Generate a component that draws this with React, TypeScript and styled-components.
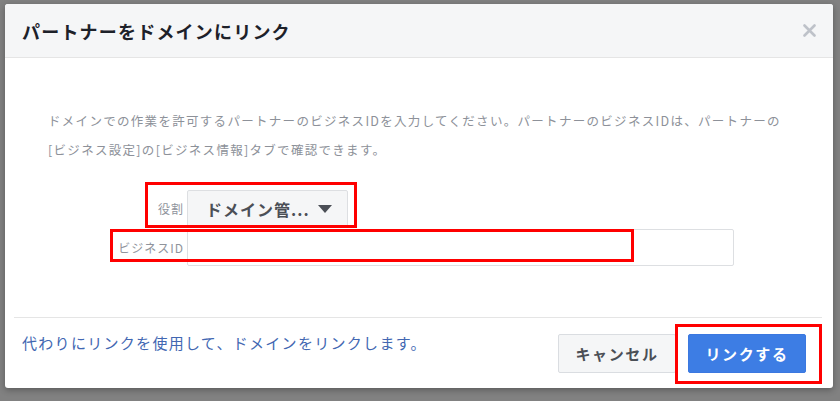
import React from 'react';
import styled, { createGlobalStyle } from 'styled-components';

const GlobalStyle = createGlobalStyle`
  html, body {
    margin: 0;
    padding: 0;
    background: #818181;
  }
  body {
    font-family: "Noto Sans CJK JP", "Noto Sans", sans-serif;
  }
`;

const Backdrop = styled.div`
  width: 840px;
  height: 401px;
  box-sizing: border-box;
  padding: 4px 7px 0 5px;
  background: #818181;
  overflow: hidden;
`;

const Dialog = styled.div`
  position: relative;
  width: 828px;
  height: 384px;
  background: #fff;
  border-radius: 3px;
  box-shadow: 0 2px 6px rgba(0, 0, 0, 0.3);
  display: flex;
  flex-direction: column;
  overflow: hidden;
`;

const Header = styled.div`
  height: 53px;
  flex: none;
  display: flex;
  align-items: center;
  justify-content: space-between;
  padding: 0 17px;
  background: #f5f6f7;
  border-bottom: 1px solid #e5e5e5;
`;

const Title = styled.h2`
  margin: 0;
  font-size: 18px;
  font-weight: 700;
  letter-spacing: 1.2px;
  color: #1d2129;
`;

const Close = styled.button`
  border: none;
  background: none;
  padding: 0;
  width: 14px;
  height: 14px;
  display: flex;
  align-items: center;
  justify-content: center;
  cursor: pointer;
`;

const Body = styled.div`
  flex: 1;
  padding: 48px 0 0 43px;
`;

const Description = styled.p`
  margin: 0;
  font-size: 12.5px;
  line-height: 29px;
  letter-spacing: 1.3px;
  color: #8d9199;
  white-space: nowrap;
`;

const Form = styled.div`
  display: grid;
  grid-template-columns: 136px 547px;
  column-gap: 3px;
  row-gap: 2px;
  margin-top: 26px;
  align-items: center;
`;

const Label = styled.label`
  text-align: right;
  font-size: 12px;
  letter-spacing: 1px;
  color: #90949c;
`;

const Dropdown = styled.button`
  justify-self: start;
  height: 37px;
  width: 161px;
  display: flex;
  align-items: center;
  gap: 8px;
  padding: 0 0 0 18px;
  box-sizing: border-box;
  background: #f5f6f7;
  border: 1px solid #dddfe2;
  border-radius: 2px;
  font-family: inherit;
  font-size: 16px;
  font-weight: 700;
  letter-spacing: 1px;
  color: #4b4f56;
`;

const Caret = styled.span`
  width: 0;
  height: 0;
  border-left: 7px solid transparent;
  border-right: 7px solid transparent;
  border-top: 8px solid #4b4f56;
`;

const Input = styled.input`
  height: 37px;
  box-sizing: border-box;
  border: 1px solid #dddfe2;
  border-radius: 2px;
  background: #fff;
`;

const Footer = styled.div`
  margin: 0 11px 0 9px;
  border-top: 1px solid #e5e5e5;
  padding: 16px 16px 15px 8px;
  display: flex;
  align-items: flex-start;
  justify-content: space-between;
`;

const AltLink = styled.a`
  margin-top: -1px;
  font-size: 15px;
  line-height: 20px;
  letter-spacing: 1.3px;
  color: #4267b2;
  text-decoration: none;
`;

const Actions = styled.div`
  display: flex;
  gap: 12px;
`;

const Button = styled.button<{ primary?: boolean }>`
  width: 118px;
  height: 39px;
  box-sizing: border-box;
  border-radius: 2px;
  font-family: inherit;
  font-size: 15px;
  font-weight: 700;
  letter-spacing: 1.6px;
  border: 1px solid ${p => (p.primary ? '#3b78e0' : '#dadde1')};
  background: ${p => (p.primary ? '#3d7de4' : '#f5f6f7')};
  color: ${p => (p.primary ? '#fff' : '#4b4f56')};
`;

const Highlight = styled.div<{ left: number; top: number; w: number; h: number }>`
  position: absolute;
  left: ${p => p.left}px;
  top: ${p => p.top}px;
  width: ${p => p.w}px;
  height: ${p => p.h}px;
  box-sizing: border-box;
  border: 3px solid #ff0000;
  pointer-events: none;
`;

export default function App() {
  return (
    <>
      <GlobalStyle />
      <Backdrop>
        <Dialog>
          <Header>
            <Title>パートナーをドメインにリンク</Title>
            <Close aria-label="閉じる">
              <svg width="13" height="13" viewBox="0 0 13 13">
                <path d="M1.5 1.5 L11.5 11.5 M11.5 1.5 L1.5 11.5" stroke="#bec2c9" strokeWidth="2.6" strokeLinecap="round" />
              </svg>
            </Close>
          </Header>

          <Body>
            <Description>
              ドメインでの作業を許可するパートナーのビジネスIDを入力してください。パートナーのビジネスIDは、パートナーの
              <br />
              [ビジネス設定]の[ビジネス情報]タブで確認できます。
            </Description>

            <Form>
              <Label>役割</Label>
              <Dropdown>
                ドメイン管...
                <Caret />
              </Dropdown>
              <Label>ビジネスID</Label>
              <Input />
            </Form>
          </Body>

          <Footer>
            <AltLink href="#">代わりにリンクを使用して、ドメインをリンクします。</AltLink>
            <Actions>
              <Button>キャンセル</Button>
              <Button primary>リンクする</Button>
            </Actions>
          </Footer>

          <Highlight left={140} top={178} w={212} h={46} />
          <Highlight left={105} top={225} w={524} h={33} />
          <Highlight left={670} top={320} w={147} h={60} />
        </Dialog>
      </Backdrop>
    </>
  );
}
